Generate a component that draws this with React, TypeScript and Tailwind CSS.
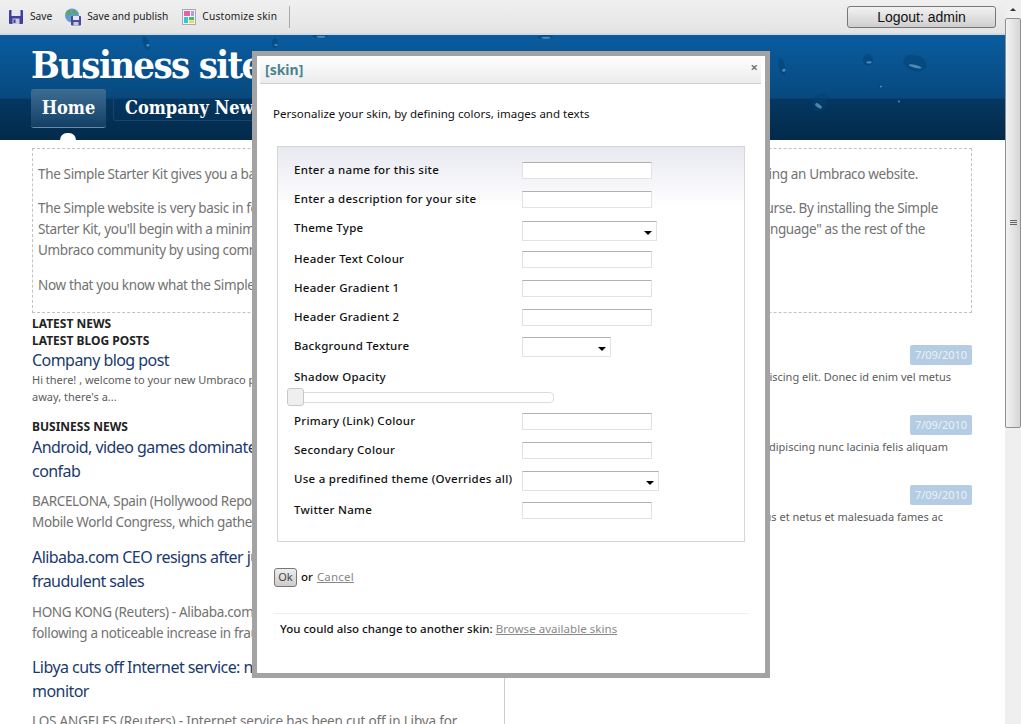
import type { ReactNode } from "react";

const slab = "font-['DejaVu_Serif_Condensed','DejaVu_Serif',serif]";
const body = "font-['Noto_Sans',sans-serif]";
const ui = "font-['Noto_Sans',sans-serif]";

function SaveIcon() {
  return (
    <svg width="16" height="16" viewBox="0 0 16 16">
      <rect x="1" y="1" width="14" height="14" rx="1" fill="#3f3f9e" />
      <rect x="3.5" y="1" width="9" height="6" fill="#e8e8f4" />
      <rect x="4.5" y="9.5" width="7" height="5.5" fill="#c9c9d8" />
      <rect x="5.5" y="10.5" width="2" height="3.5" fill="#3f3f9e" />
    </svg>
  );
}

function PublishIcon() {
  return (
    <svg width="18" height="18" viewBox="0 0 18 18">
      <circle cx="8" cy="7.5" r="7" fill="#5f9ccf" />
      <path d="M3 3c2-1 4 0 4 2S4 8 3 7 2 4 3 3zM9 2c2 0 4 2 4 4-2 1-3-1-4-1s-1-3 0-3z" fill="#5da84e" />
      <rect x="7" y="8" width="10" height="9.5" rx="1" fill="#4a4a9c" />
      <rect x="9" y="8" width="6" height="4" fill="#e8e8f4" />
      <rect x="9.5" y="14" width="5" height="3.5" fill="#c9c9d8" />
    </svg>
  );
}

function SkinIcon() {
  return (
    <svg width="14" height="16" viewBox="0 0 14 16">
      <rect x="0.5" y="0.5" width="13" height="15" fill="#f4f4f4" stroke="#a9a9b4" />
      <rect x="2" y="2" width="6" height="5" fill="#e85fae" />
      <rect x="9" y="2" width="3" height="5" fill="#b79be0" />
      <rect x="2" y="8" width="4" height="6" fill="#2fc7de" />
      <rect x="7" y="8" width="5" height="3" fill="#33c46c" />
      <rect x="7" y="11.5" width="5" height="2.5" fill="#e9d94c" />
    </svg>
  );
}

function Drops() {
  const drops = [
    [146, 8, 3, 7, -20], [275, 8, 3, 5, 0], [320, 1, 8, 2, 0], [545, 2, 8, 2, 0],
    [782, 32, 3, 9, -15], [820, 67, 7, 10, 35], [868, 25, 5, 6, 0], [915, 28, 12, 8, 15],
    [880, 51, 2, 1, 0], [898, 66, 2, 1, 0],
  ];
  return (
    <svg className="absolute inset-0 h-full w-full" viewBox="0 0 1005 105">
      {drops.map(([x, y, rx, ry, r], i) => (
        <g key={i} transform={`rotate(${r} ${x} ${y})`}>
          <ellipse cx={x} cy={y} rx={rx} ry={ry} fill="#04406f" opacity="0.5" />
          <ellipse cx={x + 1} cy={y + ry * 0.4} rx={rx * 0.55} ry={Math.max(1, ry * 0.18)} fill="#8fc0de" opacity="0.55" />
        </g>
      ))}
    </svg>
  );
}

function ToolItem({ icon, label, gap, tracking }: { icon: ReactNode; label: string; gap: string; tracking?: string }) {
  return (
    <div className={`flex items-center ${gap}`}>
      {icon}
      <span className={`text-[10.2px] text-[#222] ${tracking ?? ""}`}>{label}</span>
    </div>
  );
}

function Toolbar() {
  return (
    <div className={`flex h-[35px] shrink-0 items-center border-b-2 border-[#d6dade] bg-[linear-gradient(#f0f0f0,#e4e4e4)] pl-[8px] pr-[9px] ${ui}`}>
      <ToolItem icon={<SaveIcon />} label="Save" gap="gap-[6px]" />
      <div className="ml-[12px]">
        <ToolItem icon={<PublishIcon />} label="Save and publish" gap="gap-[5px]" />
      </div>
      <div className="ml-[14px]">
        <ToolItem icon={<SkinIcon />} label="Customize skin" gap="gap-[6px]" tracking="tracking-[0.2px]" />
      </div>
      <div className="ml-[12px] h-[22px] w-px bg-[#aaa]" />
      <button className="ml-auto h-[22px] w-[149px] rounded-[3px] border border-[#777] bg-[linear-gradient(#f2f2f2,#cfcfcf)] font-['Liberation_Sans',sans-serif] text-[14px] leading-[20px] text-[#111]">
        Logout: admin
      </button>
    </div>
  );
}

function Header() {
  return (
    <div className="relative h-[105px] shrink-0 bg-[linear-gradient(#0a5c9f_0%,#07497f_60%,#053761_61%,#032a4a_100%)]">
      <Drops />
      <div className="relative flex h-full flex-col pl-[31px]">
        <div className={`mt-[6px] h-[48px] text-[38px] font-bold leading-[48px] tracking-[-1.7px] text-white ${slab}`}>Business site</div>
        <div className="flex items-start">
          <div className={`flex h-[39px] w-[75px] items-center justify-center rounded-[3px] border-b border-[#6d8ba6] bg-[linear-gradient(#3e6d92,#123f66)] pb-[2px] text-[18px] font-bold text-white ${slab}`}>Home</div>
          <div className={`ml-[7px] mt-[5px] flex h-[27px] items-center rounded-[3px] border border-[#14466f] pl-[11px] pr-[12px] text-[18px] font-bold text-white ${slab}`}>Company News</div>
        </div>
        <div className="absolute bottom-0 left-[60px] h-[7px] w-[16px] rounded-t-full bg-white" />
      </div>
    </div>
  );
}

function Intro() {
  const lines: [string, string, string][] = [
    ["The Simple Starter Kit gives you a bare-bones website", "that introduces you to a set of conventions for building an Umbraco website.", "mt-0"],
    ["The Simple website is very basic in form and provides", "no theming by design, so you can learn from it of course. By installing the Simple", "mt-[13px]"],
    ["Starter Kit, you'll begin with a minimal site that", "lets you speak the same \"language\" as the rest of the", "mt-0"],
    ["Umbraco community by using common", "conventions.", "mt-0"],
    ["Now that you know what the Simple Starter Kit is,", "it is time to get started.", "mt-[14px]"],
  ];
  const ends = ["pr-[20px]", "pr-0", "pr-[13px]", "pr-0", "pr-0"];
  return (
    <div className="mt-[8px] h-[165px] border border-dashed border-[#c2c2c2] pl-[5px] pr-[33px] pt-[15px] text-[13.5px] leading-[21px] tracking-[-0.35px] text-[#727272]">
      {lines.map(([a, b, m], i) => (
        <div key={i} className={`flex justify-between whitespace-nowrap ${m} ${ends[i]}`}>
          <span>{a}</span>
          {i < 3 && <span>{b}</span>}
        </div>
      ))}
    </div>
  );
}

const heading = "text-[12px] font-bold leading-[17px] text-[#222]";
const link = "text-[16px] leading-[23.5px] tracking-[-0.55px] text-[#1a3a6e]";
const copy = "text-[13.5px] leading-[21px] tracking-[-0.35px] text-[#727272]";

function LeftColumn() {
  return (
    <div className="w-[473px] shrink-0 overflow-hidden whitespace-nowrap border-r border-[#ccc] pt-[2px]">
      <div className={heading}>LATEST NEWS</div>
      <div className={heading}>LATEST BLOG POSTS</div>
      <div className="text-[16px] leading-[22px] tracking-[-0.55px] text-[#1a3a6e]">Company blog post</div>
      <div className="text-[11px] leading-[17px] text-[#5c5c5c]">Hi there! , welcome to your new Umbraco powered website, and</div>
      <div className="text-[11px] leading-[17px] text-[#5c5c5c]">away, there's a...</div>
      <div className={`mt-[13px] ${heading}`}>BUSINESS NEWS</div>
      <div className={`mt-[1px] ${link}`}>Android, video games dominate Barcelona mobile</div>
      <div className={link}>confab</div>
      <div className={`mt-[8px] ${copy}`}>BARCELONA, Spain (Hollywood Reporter) - At the annual</div>
      <div className={copy}>Mobile World Congress, which gathered the industry</div>
      <div className={`mt-[13px] ${link}`}>Alibaba.com CEO resigns after jump in</div>
      <div className={link}>fraudulent sales</div>
      <div className={`mt-[9px] ${copy}`}>HONG KONG (Reuters) - Alibaba.com's chief resigned</div>
      <div className={copy}>following a noticeable increase in fraud on the site</div>
      <div className={`mt-[12px] ${link}`}>Libya cuts off Internet service: network</div>
      <div className={link}>monitor</div>
      <div className="mt-[8px] text-[13.5px] leading-[21px] tracking-[-0.17px] text-[#727272]">LOS ANGELES (Reuters) - Internet service has been cut off in Libya for</div>
    </div>
  );
}

function RightColumn() {
  const posts: [string, string][] = [
    ["Lorem ipsum dolor sit amet, consectetur adipiscing elit. Donec id enim vel metus", "pr-[21px]"],
    ["Lorem ipsum dolor sit amet, consectetur adipiscing nunc lacinia felis aliquam", "pr-[24px]"],
    ["Pellentesque habitant morbi tristique senectus et netus et malesuada fames ac", "pr-[29px]"],
  ];
  return (
    <div className="flex-1 overflow-hidden pt-[32px]">
      {posts.map(([text, end], i) => (
        <div key={i} className="mb-[29px] h-[41px]">
          <div className="ml-auto flex h-[20px] w-[62px] items-center justify-center rounded-[2px] bg-[#b4cde2] text-[11px] text-[#e9f1f7]">7/09/2010</div>
          <div className={`mt-[3px] whitespace-nowrap text-right text-[11px] leading-[18px] text-[#5c5c5c] ${end}`}>{text}</div>
        </div>
      ))}
    </div>
  );
}

function Scrollbar() {
  return (
    <div className="flex w-[16px] shrink-0 flex-col bg-[#efefef]">
      <div className="flex h-[18px] items-center justify-center">
        <div className="h-0 w-0 border-x-[3px] border-b-[3px] border-x-transparent border-b-[#333]" />
      </div>
      <div className="flex h-[410px] flex-col items-center justify-end rounded-[2px] border border-[#8f8f8f] bg-[linear-gradient(90deg,#f2f2f2,#d6d6d6)] pb-[202px]">
        <div className="h-[1px] w-[7px] bg-[#666]" />
        <div className="mt-[1px] h-[1px] w-[7px] bg-[#666]" />
        <div className="mt-[1px] h-[1px] w-[7px] bg-[#666]" />
      </div>
    </div>
  );
}

function Input() {
  return <input className="h-[17px] w-[130px] border border-[#e2e2e2] border-t-[#b0b0b0] bg-white" />;
}

function Select({ width, offset }: { width: string; offset: string }) {
  return (
    <div className={`relative h-[20px] ${width} ${offset}`}>
      <select className="h-full w-full appearance-none border border-[#e2e2e2] border-t-[#b0b0b0] bg-white" />
      <div className="absolute right-[5px] top-[10px] h-0 w-0 border-x-[4px] border-t-[4px] border-x-transparent border-t-black" />
    </div>
  );
}

function Row({ label, className, children }: { label: string; className?: string; children: ReactNode }) {
  return (
    <div className={`flex h-[29px] items-center whitespace-nowrap pl-[16px] ${className ?? ""}`}>
      <label className="mb-[2px] w-[228px] text-[11.5px] font-medium tracking-[0.26px] text-[#111]">{label}</label>
      {children}
    </div>
  );
}

function SkinDialog() {
  return (
    <div className={`absolute left-[252px] top-[51px] h-[627px] w-[518px] border-[5px] border-[#a3a3a3] bg-white ${ui}`}>
      <div className="relative ml-[3px] mr-[4px] flex h-[28px] items-center border-b border-[#d0d0d0] bg-[linear-gradient(#ffffff,#ececec)] pl-[5px]">
        <span className="text-[14px] font-bold text-[#4c848e]">[skin]</span>
        <span className="absolute right-[3px] top-[3px] text-[13px] font-bold leading-[16px] text-[#777]">×</span>
      </div>
      <p className="ml-[16px] mt-[21px] text-[11.5px] leading-[18px] tracking-[0.03px] text-[#111]">Personalize your skin, by defining colors, images and texts</p>
      <div className="ml-[20px] mt-[23px] h-[396px] w-[468px] border border-[#d6d6d6] bg-[linear-gradient(#e8e8f2,#ffffff_60px)] pt-[9px]">
        <Row label="Enter a name for this site"><Input /></Row>
        <Row label="Enter a description for your site"><Input /></Row>
        <Row label="Theme Type"><Select width="w-[135px]" offset="mt-[4px]" /></Row>
        <Row label="Header Text Colour" className="mt-[2px]"><Input /></Row>
        <Row label="Header Gradient 1"><Input /></Row>
        <Row label="Header Gradient 2"><Input /></Row>
        <Row label="Background Texture"><Select width="w-[89px]" offset="mt-0" /></Row>
        <div className="mt-[8px] h-[16px] pl-[16px] text-[11.5px] font-medium leading-[16px] tracking-[0.26px] text-[#111]">Shadow Opacity</div>
        <div className="relative ml-[9px] mt-[3px] flex h-[18px] w-[267px] items-center">
          <div className="h-[11px] w-full rounded-[4px] border border-[#dcdcdc] bg-white" />
          <div className="absolute left-0 top-0 h-[18px] w-[17px] rounded-[3px] border border-[#c8c8c8] bg-[#efefef]" />
        </div>
        <Row label="Primary (Link) Colour" className="mt-[1px]"><Input /></Row>
        <Row label="Secondary Colour"><Input /></Row>
        <Row label="Use a predifined theme (Overrides all)"><Select width="w-[137px]" offset="mt-[2px]" /></Row>
        <Row label="Twitter Name" className="mt-[2px]"><Input /></Row>
      </div>
      <div className="ml-[17px] mt-[26px] flex h-[19px] items-center text-[11.5px] font-medium text-[#111]">
        <button className="h-[19px] w-[23px] rounded-[3px] border border-[#777] bg-[linear-gradient(#eeeeee,#cccccc)] text-[11px] font-normal text-[#444]">Ok</button>
        <span className="mb-[1px] ml-[4px]">or</span>
        <a className="mb-[1px] ml-[4px] font-normal tracking-[0.2px] text-[#888] underline">Cancel</a>
      </div>
      <div className="ml-[16px] mr-[16px] mt-[26px] border-t border-[#eeeeee] pl-[7px] pt-[6px] text-[11.5px] font-medium leading-[18px] tracking-[0.02px] text-[#111]">
        You could also change to another skin: <a className="font-normal tracking-[0.04px] text-[#888] underline">Browse available skins</a>
      </div>
    </div>
  );
}

export default function App() {
  return (
    <div className={`relative flex h-[724px] w-[1021px] overflow-hidden bg-white ${body}`}>
      <div className="flex w-[1005px] shrink-0 flex-col">
        <Toolbar />
        <Header />
        <div className="flex min-h-0 flex-1 flex-col pl-[32px] pr-[33px]">
          <Intro />
          <div className="flex min-h-0 flex-1">
            <LeftColumn />
            <RightColumn />
          </div>
        </div>
      </div>
      <Scrollbar />
      <SkinDialog />
    </div>
  );
}
